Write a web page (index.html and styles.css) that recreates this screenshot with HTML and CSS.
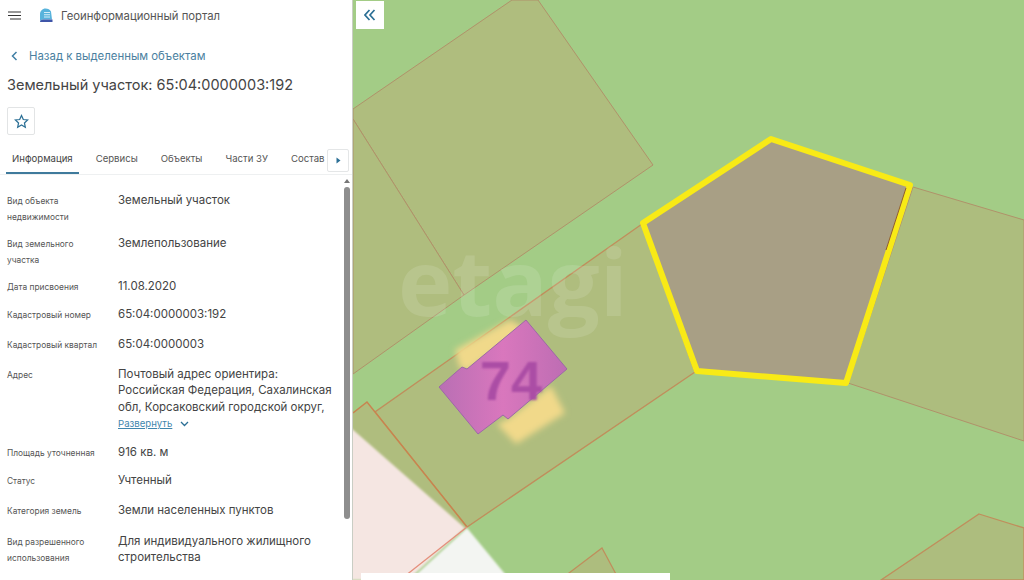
FILE: index.html
```html
<!DOCTYPE html>
<html>

<head>
  <meta charset="utf-8">
  <meta name="viewport" content="width=device-width, initial-scale=1">
  <title>Геоинформационный портал</title>
  <link rel="stylesheet" href="styles.css">
</head>

<body>
  <div class="app">
    <aside class="sidebar">
      <header class="topbar">
        <svg class="menu-icon" width="14" height="10" viewBox="0 0 14 10">
          <path d="M0 1h13M0 4.500h13M2 8h11" stroke="#333" stroke-width="1.200" fill="none" />
        </svg>
        <svg class="logo" width="14" height="15" viewBox="0 0 14 15">
          <path d="M1 14V6C1 3 3.500 .5 6.500 .5C9 .5 11 1.500 12 3.500L13 11.500H4C2.500 11.500 1 12.500 1 14z" fill="#58b3dc" />
          <path d="M1 14c0-1.500 1.500-2.500 3-2.500h9.500V14z" fill="#3f55a8" />
          <path d="M5 4.500h6M5 6.800h6M5 9h6" stroke="#d5eef8" stroke-width="1.100" />
        </svg>
        <span class="portal-name">Геоинформационный портал</span>
      </header>

      <a class="back-link">
        <svg width="7" height="10" viewBox="0 0 7 10">
          <path d="M5.500 1L1.500 5l4 4" stroke="#3f7fa5" stroke-width="1.500" fill="none" />
        </svg>
        <span>Назад к выделенным объектам</span>
      </a>

      <h1 class="object-title">Земельный участок: 65:04:0000003:192</h1>

      <button class="star-btn">
        <svg width="15" height="15" viewBox="0 0 24 24">
          <path d="M12 2.500l2.900 6.300 6.900.8-5.100 4.700 1.400 6.800-6.100-3.400-6.100 3.400 1.400-6.800-5.100-4.700 6.900-.8z"
            stroke="#2b6f95" stroke-width="2" fill="none" />
        </svg>
      </button>

      <nav class="tabs">
        <a class="tab active">Информация</a>
        <a class="tab">Сервисы</a>
        <a class="tab">Объекты</a>
        <a class="tab">Части ЗУ</a>
        <a class="tab">Состав</a>
        <button class="tab-next">
          <svg width="5" height="7" viewBox="0 0 5 7">
            <path d="M0.500 0.500L4.500 3.500L0.500 6.500z" fill="#2b6f95" />
          </svg>
        </button>
      </nav>

      <div class="props">
        <div class="prop tight">
          <div class="prop-label">Вид объекта недвижимости</div>
          <div class="prop-value">Земельный участок</div>
        </div>
        <div class="prop tight">
          <div class="prop-label">Вид земельного участка</div>
          <div class="prop-value">Землепользование</div>
        </div>
        <div class="prop">
          <div class="prop-label">Дата присвоения</div>
          <div class="prop-value">11.08.2020</div>
        </div>
        <div class="prop wide-gap">
          <div class="prop-label">Кадастровый номер</div>
          <div class="prop-value">65:04:0000003:192</div>
        </div>
        <div class="prop wide-gap">
          <div class="prop-label">Кадастровый квартал</div>
          <div class="prop-value">65:04:0000003</div>
        </div>
        <div class="prop">
          <div class="prop-label">Адрес</div>
          <div class="prop-value">
            Почтовый адрес ориентира: Российская Федерация, Сахалинская обл, Корсаковский городской округ,
            <a class="expand">
              <span>Развернуть</span>
              <svg width="9" height="6" viewBox="0 0 9 6">
                <path d="M1 1l3.500 3.500L8 1" stroke="#2b6f95" stroke-width="1.300" fill="none" />
              </svg>
            </a>
          </div>
        </div>
        <div class="prop">
          <div class="prop-label">Площадь уточненная</div>
          <div class="prop-value">916 кв. м</div>
        </div>
        <div class="prop wide-gap">
          <div class="prop-label">Статус</div>
          <div class="prop-value">Учтенный</div>
        </div>
        <div class="prop widest-gap">
          <div class="prop-label">Категория земель</div>
          <div class="prop-value">Земли населенных пунктов</div>
        </div>
        <div class="prop">
          <div class="prop-label">Вид разрешенного использования</div>
          <div class="prop-value">Для индивидуального жилищного строительства</div>
        </div>
      </div>

      <div class="scroll-arrow"></div>
      <div class="scroll-thumb"></div>
    </aside>

    <main class="map">
      <svg class="map-canvas" width="671" height="580" viewBox="353 0 671 580">
        <defs>
          <filter id="soft" x="-10%" y="-10%" width="120%" height="120%">
            <feGaussianBlur stdDeviation="1.200" />
          </filter>
          <filter id="softer" x="-20%" y="-20%" width="140%" height="140%">
            <feGaussianBlur stdDeviation="3" />
          </filter>
          <filter id="digits" x="-20%" y="-20%" width="140%" height="140%">
            <feGaussianBlur stdDeviation="1.200" />
          </filter>
          <linearGradient id="roof" x1="0" y1="0" x2="1" y2="0">
            <stop offset="0" stop-color="#b96fb4" />
            <stop offset="0.500" stop-color="#d977bd" />
            <stop offset="1" stop-color="#bd6db3" />
          </linearGradient>
        </defs>

        <rect x="353" y="0" width="671" height="580" fill="#a3cc86" />

        <!-- parcels -->
        <polygon points="353,109 512,0 538,0 653,165 464,295 353,119" fill="#afbd7e" stroke="#b0926a" />
        <polygon points="353,119 464,295 353,374" fill="#afbd7e" stroke="#b0926a" />
        <polygon points="642,224 375,412 467,527 695,372" fill="#afbd7e" stroke="#c08e5c" stroke-width="1.300" />
        <polygon points="913,187 1024,220 1024,441 848,383" fill="#adbd7e" stroke="#b0926a" />
        <polygon points="979,514 1024,528 1024,580 881,580" fill="#adbd7e" stroke="#c08e5c" stroke-width="1.300" />
        <polygon points="602,548 617,576 565,576" fill="#adbd7e" stroke="#c08e5c" stroke-width="1.300" />
        <polygon points="353,413 367,402 467,527 440,548 353,470" fill="#afbd7e" />

        <!-- road and empty land -->
        <polygon points="351,428 465,528 408,580 351,580" fill="#f5e6e2" filter="url(#soft)" />
        <polygon points="467,528 505,574 505,582 408,582" fill="#f3f5f2" filter="url(#soft)" />
        <path d="M353 413L367 402L467 527" fill="none" stroke="#c8844f" stroke-width="1.500" />
        <path d="M467 527L405 576" fill="none" stroke="#e58f7c" stroke-width="1.300" />

        <text class="watermark" x="398" y="316">etagi</text>

        <!-- house -->
        <polygon points="455,350 510,320 527,330 467,371 460,368" fill="#f0d98a" filter="url(#softer)" />
        <polygon points="551,386 565,413 516,444 497,424 508,419" fill="#f1d98a" filter="url(#softer)" />
        <polygon points="526,320 567,369 508,419 503,415 478,434 439,387 462,367 467,369" fill="url(#roof)"
          stroke="#9c6aa6" />
        <text class="house-number" x="511" y="400" filter="url(#digits)">74</text>

        <!-- selected parcel -->
        <polygon points="771,139 910,185 846,383 697,371 643,223" fill="#a89f85" stroke="#f8ea16" stroke-width="6"
          stroke-linejoin="round" />
        <path d="M906 188L886 250" stroke="#8e5a35" stroke-width="1" fill="none" />
      </svg>

      <button class="collapse-btn">
        <svg width="12" height="12" viewBox="0 0 12 12">
          <path d="M5.500 1L1 6l4.500 5M10.500 1L6 6l4.500 5" stroke="#2b6f95" stroke-width="1.700" fill="none" />
        </svg>
      </button>
      <div class="map-footer"></div>
    </main>
  </div>
</body>

</html>
```

FILE: styles.css
```css
* {
  box-sizing: border-box;
}

body {
  margin: 0;
  overflow: hidden;
  font-family: Inter, "Liberation Sans", sans-serif;
  color: #444;
  background-color: #fff;
}

.app {
  display: flex;
  width: 1024px;
  height: 580px;
}

.sidebar {
  position: relative;
  flex: 0 0 352px;
  overflow: hidden;
  background-color: #fff;
}

.topbar {
  display: flex;
  align-items: center;
  height: 31px;
  padding-left: 8px;
}

.menu-icon {
  margin-right: 17px;
}

.logo {
  margin-right: 8px;
}

.portal-name {
  font-size: 11.3px;
  color: #555;
}

.back-link {
  display: flex;
  align-items: center;
  gap: 11px;
  margin-top: 17px;
  padding-left: 11px;
  font-size: 11.4px;
  line-height: 16px;
  color: #4b7f9f;
}

.object-title {
  margin: 11px 0 0 7px;
  font-size: 14.5px;
  line-height: 20px;
  font-weight: 400;
  color: #444;
}

.star-btn {
  display: flex;
  align-items: center;
  justify-content: center;
  width: 28px;
  height: 28px;
  margin: 12px 0 0 7px;
  padding: 0;
  border: 1px solid #e2e4e5;
  border-radius: 2px;
  background-color: #fff;
}

.tabs {
  position: relative;
  display: flex;
  gap: 23px;
  height: 33px;
  margin-top: 7px;
  padding: 10px 0 0 12px;
  border-bottom: 1px solid #eef0f1;
  font-size: 9.6px;
  line-height: 14px;
  color: #555;
}

.tab {
  white-space: nowrap;
}

.tab.active {
  color: #444;
}

.tab.active::after {
  content: "";
  position: absolute;
  left: 6px;
  top: 30px;
  width: 73px;
  height: 2px;
  background-color: #3f7a9c;
}

.tab-next {
  position: absolute;
  left: 327px;
  top: 7px;
  display: flex;
  align-items: center;
  justify-content: center;
  width: 22px;
  height: 23px;
  padding: 0;
  border: 1px solid #e4e6e7;
  border-radius: 2px;
  background-color: #fff;
}

.props {
  padding: 18px 12px 0 7px;
}

.prop {
  display: grid;
  grid-template-columns: 111px 1fr;
  margin-bottom: 12px;
}

.prop.tight {
  margin-bottom: 11px;
}

.prop.wide-gap {
  margin-bottom: 14px;
}

.prop.widest-gap {
  margin-bottom: 15px;
}

.prop-label {
  padding-right: 14px;
  font-size: 8.4px;
  line-height: 16px;
  color: #555;
}

.prop-value {
  margin-top: -1px;
  font-size: 11.5px;
  line-height: 16.4px;
  color: #444;
}

.expand {
  display: flex;
  align-items: center;
  gap: 8px;
  margin-top: 1px;
  font-size: 9.6px;
  color: #3f86ad;
}

.expand span {
  text-decoration: underline;
}

.scroll-arrow {
  position: absolute;
  left: 344px;
  top: 179px;
  width: 0;
  height: 0;
  border-left: 3px solid transparent;
  border-right: 3px solid transparent;
  border-bottom: 4px solid #777;
}

.scroll-thumb {
  position: absolute;
  left: 344px;
  top: 187px;
  width: 6px;
  height: 332px;
  border-radius: 3px;
  background-color: #8e8e8e;
}

.map {
  position: relative;
  flex: 1;
  overflow: hidden;
  border-left: 1px solid #c9cdc4;
}

.map-canvas {
  display: block;
}

.watermark {
  font-family: "Open Sans", sans-serif;
  font-size: 92px;
  font-weight: 700;
  fill: #fff;
  fill-opacity: 0.12;
}

.house-number {
  font-family: "Liberation Sans", sans-serif;
  font-size: 56px;
  font-weight: 700;
  fill: #ab4ea5;
  text-anchor: middle;
}

.collapse-btn {
  position: absolute;
  left: 3px;
  top: 1px;
  display: flex;
  align-items: center;
  justify-content: center;
  width: 28px;
  height: 28px;
  padding: 0;
  border: 0;
  background-color: #fff;
}

.map-footer {
  position: absolute;
  left: 8px;
  top: 573px;
  width: 309px;
  height: 7px;
  background-color: #fff;
}
```
